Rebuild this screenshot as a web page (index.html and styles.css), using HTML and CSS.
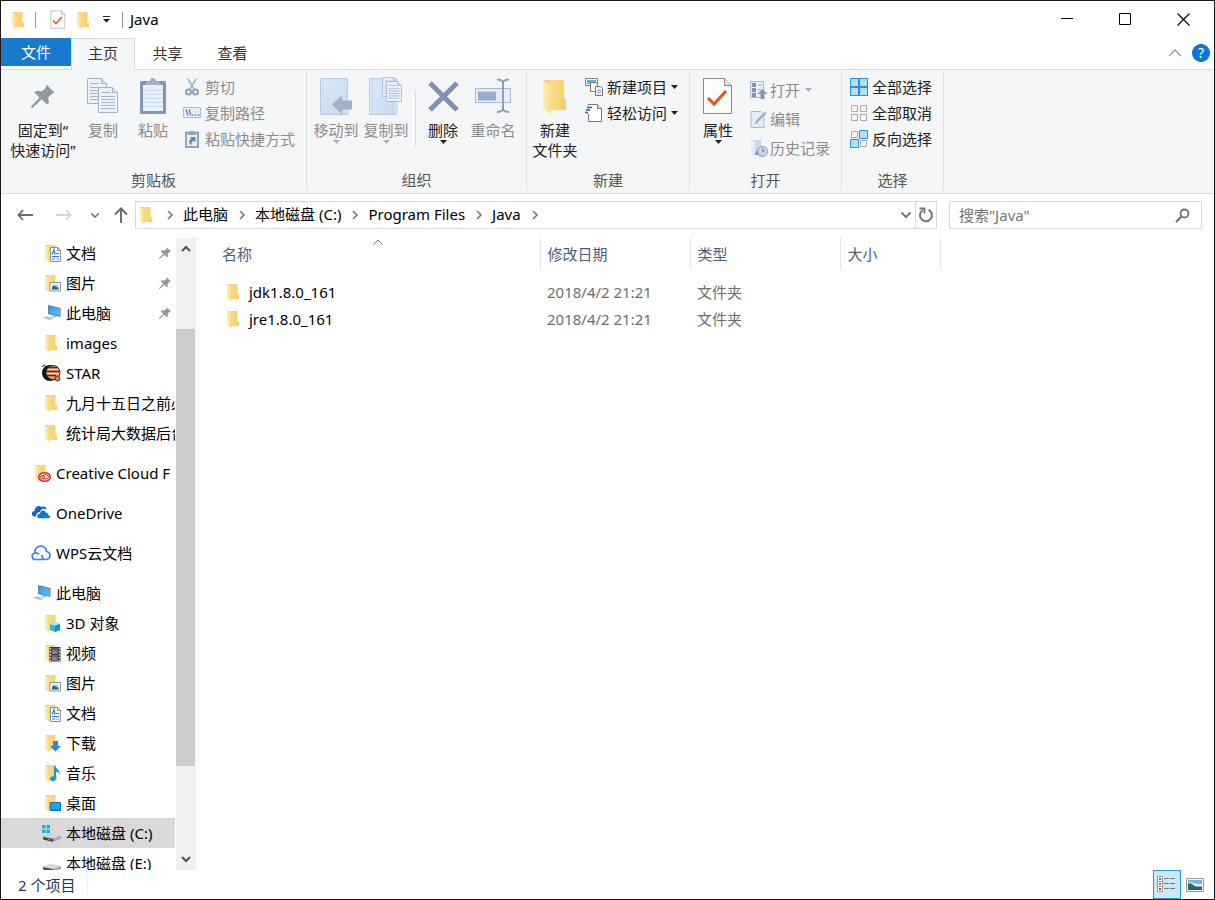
FILE: index.html
```html
<!DOCTYPE html>
<html lang="zh-CN">
<head>
<meta charset="utf-8">
<title>Java</title>
<link rel="stylesheet" href="styles.css">
</head>
<body>
<svg class="defs" aria-hidden="true">
  <defs>
    <linearGradient id="gBack" x1="0" x2="1"><stop offset="0" stop-color="#fbe097"/><stop offset="1" stop-color="#f6cf68"/></linearGradient>
    <linearGradient id="gFlap" x1="0" x2="1"><stop offset="0" stop-color="#ffedb0"/><stop offset="1" stop-color="#ffe08c"/></linearGradient>
    <linearGradient id="gScreen" x1="0" x2="1" y2="1"><stop offset="0" stop-color="#2b9be6"/><stop offset="1" stop-color="#57c4fb"/></linearGradient>
    <linearGradient id="gBlue" x1="0" x2="1" y2="1"><stop offset="0" stop-color="#dde8f6"/><stop offset="1" stop-color="#c9d9ee"/></linearGradient>
    <symbol id="folder" viewBox="0 0 20 20"><path d="M4 2h10.500v10.500h1.500v4.500H6z" fill="url(#gBack)"/><path d="M4 2l4 2.500v14L4 16.500z" fill="url(#gFlap)"/><path d="M4 2h4v2.500z" fill="#f5d27c"/><path d="M8 4.500v14" stroke="#f3cf73" stroke-width=".7"/></symbol>
    <symbol id="pin" viewBox="0 0 30 30"><path d="M18.500 2.500l9 9-3 1.200-4 4.300.8 5.500-2.300 1.500-5.500-5.500L3.500 28 2 26.500l9.300-9.800L5.800 11.500 8 9.300l6 .5 4.200-4z" fill="#8f9ba3"/></symbol>
    <symbol id="doc" viewBox="0 0 20 20"><use href="#folder"/><path d="M9.500 4.500h7L19.500 7v11.500h-10z" fill="#fff" stroke="#8c9196"/><path d="M16.500 4.500V7.500h3" fill="none" stroke="#8c9196"/><path d="M11 13.500h7M11 16h3M15.500 16H18M15 10.500H18" stroke="#2f86c8"/><path d="M11 11.500l2-5 1 5" fill="none" stroke="#2b86cc" stroke-width="1.300"/></symbol>
    <symbol id="picture" viewBox="0 0 20 20"><use href="#folder"/><path d="M9 9.500h10.500v8.500H9z" fill="#fff" stroke="#8f969c"/><path d="M11 11.500h6.500v5H11z" fill="#9dcff3"/><path d="M11 14l2-1.500 4.500 2.500v1.500H11z" fill="#2d6582"/></symbol>
    <symbol id="pc" viewBox="0 0 20 20"><path d="M7 2l12.500 3v9L7 11z" fill="#5b7f98"/><path d="M7.700 3l11 2.800v7L7.700 10z" fill="url(#gScreen)"/><path d="M1 14.500l6-1.500 7 2.500-5 2z" fill="#d5dade"/><path d="M3 14.800l4-.8M5 15.500l4-.9M7 16.200l4-.9" stroke="#a6afb6" stroke-width=".7"/><path d="M11 12.500l4 1v1l-4-1z" fill="#8fa2ae"/></symbol>
    <symbol id="sheet" viewBox="0 0 32 38"><path d="M1.500 1.500h21l7 7v28h-28z" fill="#fdfdfd" stroke="#868686"/><path d="M22.500 1.500v7h7" fill="#e6e6e6" stroke="#868686"/><path d="M6 21l6 6 12-13" fill="none" stroke="#e9531a" stroke-width="3"/></symbol>
    <symbol id="page" viewBox="0 0 20 26"><path d="M.5.500h14l5 5v20H.5z" fill="#eaf1fb" stroke="#9db3d2"/><path d="M14.500.500v5h5" fill="#d5e2f3" stroke="#9db3d2"/><path d="M3 5.500h9M3 9.500h14M3 12.500h14M3 15.500h14M3 18.500h14M3 21.500h14" stroke="#a3b6d2"/></symbol>
    <symbol id="book" viewBox="0 0 30 38"><path d="M.5.500h27v36H.5z" fill="url(#gBlue)" stroke="#b9cce6"/><path d="M3.500.500v36" stroke="#c8d8ed"/><path d="M24 26c0-3 4-3 4 0v10.500h-4z" fill="#d5e2f3" stroke="#b9cce6"/></symbol>
    <symbol id="chev" viewBox="0 0 8 10"><path d="M2 1l4 4-4 4" fill="none" stroke="#767676" stroke-width="1.600"/></symbol>
    <symbol id="down" viewBox="0 0 12 8"><path d="M1.500 1.500L6 6l4.500-4.500" fill="none" stroke="#777" stroke-width="2"/></symbol>
    <symbol id="caret" viewBox="0 0 7 4"><path d="M0 0h7L3.500 4z" fill="currentColor"/></symbol>
  </defs>
</svg>

<div class="window">
  <header class="titlebar">
    <svg class="icon"><use href="#folder"/></svg>
    <span class="bar"></span>
    <button class="quick" aria-label="属性"><svg class="i-sheet"><use href="#sheet"/></svg></button>
    <button class="quick" aria-label="新建文件夹"><svg class="icon"><use href="#folder"/></svg></button>
    <button class="quick more" aria-label="自定义快速访问工具栏"><svg width="7" height="7" viewBox="0 0 7 7"><path d="M0 .500h7" stroke="#222"/><path d="M0 3h7L3.500 6.500z" fill="#111"/></svg></button>
    <span class="bar"></span>
    <h1>Java</h1>
    <div class="winctl">
      <button aria-label="最小化"><svg width="13" height="13" viewBox="0 0 13 13"><path d="M0 5.500h12" stroke="#000"/></svg></button>
      <button aria-label="最大化"><svg width="13" height="13" viewBox="0 0 13 13"><path d="M.5.500h11v11H.5z" fill="none" stroke="#000"/></svg></button>
      <button aria-label="关闭"><svg width="13" height="13" viewBox="0 0 13 13"><path d="M.5.500l12 12M12.500.500l-12 12" stroke="#000" stroke-width="1.200"/></svg></button>
    </div>
  </header>

  <nav class="tabs">
    <button class="tab file">文件</button>
    <button class="tab active">主页</button>
    <button class="tab">共享</button>
    <button class="tab">查看</button>
    <div class="help">
      <button aria-label="最小化功能区"><svg width="14" height="8" viewBox="0 0 14 8"><path d="M1 7l6-6 6 6" fill="none" stroke="#9a9a9a" stroke-width="1.300"/></svg></button>
      <button aria-label="帮助" class="q">?</button>
    </div>
  </nav>

  <section class="ribbon">
    <div class="group">
      <div class="tools clip">
        <button class="big wide"><span class="pic"><svg width="28" height="28"><use href="#pin"/></svg></span>固定到“<br>快速访问”</button>
        <button class="big off"><span class="pic"><svg width="32" height="38" viewBox="0 0 32 38"><use href="#page" width="20" height="26" x="0" y="1"/><use href="#page" width="20" height="26" x="11" y="10"/></svg></span>复制</button>
        <button class="big off"><span class="pic"><svg width="28" height="38" viewBox="0 0 28 38"><rect x="1" y="4" width="26" height="33" rx="1.500" fill="#8296ba"/><path d="M4 8h20v26H4z" fill="#e8f0fb"/><path d="M4 13.500h20M4 17.500h20M4 21.500h20M4 25.500h20M4 29.500h20" stroke="#cddbef"/><path d="M6 8c0-3 3-4 5-4 0-4 6-4 6 0 2 0 5 1 5 4z" fill="#a0b1ce"/></svg></span>粘贴</button>
        <div class="list">
          <button class="small off"><svg class="si" viewBox="0 0 18 18"><path d="M5 1l6.500 11M13 1L6.500 12" stroke="#a9b6cb" stroke-width="1.800"/><circle cx="5.500" cy="14" r="2.500" fill="none" stroke="#8fa1bf" stroke-width="2"/><circle cx="12.500" cy="14" r="2.500" fill="none" stroke="#8fa1bf" stroke-width="2"/></svg>剪切</button>
          <button class="small off"><svg class="si" viewBox="0 0 18 18"><path d="M.5 3.500h17v10H.5z" fill="#e3ecf9" stroke="#a9bcda"/><path d="M3 5.500l2 6M6 5.500l2 6" stroke="#6d83aa" stroke-width="1.300"/><path d="M9 11h1.500M12 11h1.500M15 11h1.500" stroke="#6d83aa" stroke-width="1.300"/></svg>复制路径</button>
          <button class="small off"><svg class="si" viewBox="0 0 18 18"><path d="M3 2.500h12v14.500H3z" fill="#e8f0fb" stroke="#8fa3c4" stroke-width="2"/><path d="M5 3h2.500c0-3 3-3 3 0H13v2H5z" fill="#8fa3c4"/><path d="M6.500 14.500c-1-4 .5-5.500 2-5.500L7 7h5.500v5.500L11 11c-2 0-2.500 1.500-2.500 3.500z" fill="#6d83aa"/></svg>粘贴快捷方式</button>
        </div>
      </div>
      <h2>剪贴板</h2>
    </div>

    <div class="group">
      <div class="tools organize">
        <button class="big off"><span class="pic"><svg width="34" height="38" viewBox="0 0 34 38"><use href="#book" width="30" height="38" x="1" y="1"/><path d="M13 27.500l10-9v5h10v9H23v5z" fill="#a0b1cc"/></svg></span>移动到<svg class="caret"><use href="#caret"/></svg></button>
        <button class="big off"><span class="pic"><svg width="36" height="38" viewBox="0 0 36 38"><use href="#book" width="30" height="38" x="1" y="1"/><use href="#page" width="16" height="20" x="14" y="0"/><use href="#page" width="16" height="21" x="18" y="4"/></svg></span>复制到<svg class="caret"><use href="#caret"/></svg></button>
        <span class="sep"></span>
        <button class="big"><span class="pic"><svg width="34" height="38" viewBox="0 0 34 38"><path d="M4 6l27 27M31 6L4 33" stroke="#8091b1" stroke-width="5"/></svg></span>删除<svg class="caret"><use href="#caret"/></svg></button>
        <button class="big off"><span class="pic"><svg width="38" height="38" viewBox="0 0 38 38"><path d="M1.500 11.500h35v14h-35z" fill="#e4edf9" stroke="#a6b9d7"/><path d="M4 14.500h18v9H4z" fill="#9badcb"/><path d="M23 2.500c3 0 5 1 6 2.500 1-1.500 3-2.500 6-2.500M29 5v28M23 35c3 0 5-1 6-2.500 1 1.500 3 2.500 6 2.500" fill="none" stroke="#8b9fbf" stroke-width="2"/></svg></span>重命名</button>
      </div>
      <h2>组织</h2>
    </div>

    <div class="group">
      <div class="tools">
        <button class="big"><span class="pic"><svg width="28" height="38" viewBox="0 0 28 38"><path d="M3 3h20v19h2v11H9z" fill="url(#gBack)"/><path d="M2 3l8 5v29l-8-5z" fill="url(#gFlap)"/><path d="M2 3h7v4.500z" fill="#f5cf70"/></svg></span>新建<br>文件夹</button>
        <div class="list">
          <button class="small"><svg class="si" viewBox="0 0 18 18"><path d="M.5.500h12v7H.5z" fill="#fff" stroke="#6f8a9c"/><path d="M2 2h9v4H2z" fill="#5bb0e6"/><path d="M5.500 4.500h5l2 2v7h-7z" fill="#fff" stroke="#777"/><path d="M10.500 8.500h5l2 2v7h-7z" fill="#fff" stroke="#777"/><path d="M12 12.500h4M12 14.500h4" stroke="#6ea5dd"/><path d="M13.500 9v8" stroke="#eea0a0" stroke-width=".7"/></svg>新建项目<svg class="caret"><use href="#caret"/></svg></button>
          <button class="small"><svg class="si" viewBox="0 0 18 18"><path d="M3.500.500h9l4 4v13h-13z" fill="#fff" stroke="#777"/><path d="M12.500.500v4h4" fill="#e8e8e8" stroke="#777"/><path d="M1 3.500h7M0 6h6M0 8.500h5" stroke="#f4f5f7" stroke-width="3"/><path d="M2 3.500h5M1 6h4M0 8.500h3" stroke="#1a66ad" stroke-width="1.300"/></svg>轻松访问<svg class="caret"><use href="#caret"/></svg></button>
        </div>
      </div>
      <h2>新建</h2>
    </div>

    <div class="group">
      <div class="tools">
        <button class="big"><span class="pic"><svg width="32" height="38"><use href="#sheet"/></svg></span>属性<svg class="caret"><use href="#caret"/></svg></button>
        <div class="list loose">
          <button class="small off"><svg class="si" viewBox="0 0 18 18"><path d="M.5.500h13v16H.5z" fill="#e8f0fa" stroke="#a9b8d0"/><path d="M2 2h4v4H2zM2 7h4v4H2zM2 12h4v4H2z" fill="#7f92b4"/><path d="M8 4h4M8 8.500h3" stroke="#9aabc8"/><path d="M12.500 8l5 5h-3v5h-4v-5h-3z" fill="#8397bb"/></svg>打开<svg class="caret"><use href="#caret"/></svg></button>
          <button class="small off"><svg class="si" viewBox="0 0 18 18"><path d="M1 1.500h10l3 3v13H1z" fill="#e3ecf8" stroke="#a9b8d0"/><path d="M4 15l1-3.500L14.500 1l2.500 2.500L7 13.500z" fill="#9fb1cd" stroke="#fff" stroke-width=".6"/></svg>编辑</button>
          <button class="small off"><svg class="si" viewBox="0 0 18 18"><path d="M1 1h10v14H5z" fill="#cddaec"/><path d="M1 1l4 2v14l-4-2z" fill="#e3ecf8"/><circle cx="12.500" cy="12.500" r="5" fill="#c9d3e2" stroke="#8b9cb9"/><path d="M12.500 9.500v3l2.500-1" fill="none" stroke="#7387ab"/><path d="M5 14c1-3 3-2 3-2l1 4H5z" fill="#8b9fbf"/></svg>历史记录</button>
        </div>
      </div>
      <h2>打开</h2>
    </div>

    <div class="group">
      <div class="tools">
        <div class="list">
          <button class="small"><svg class="si" viewBox="0 0 18 18"><path d="M0 0h18v18H0z" fill="#2b90e0"/><path d="M1 1h7v7H1zM10 1h7v7h-7zM1 10h7v7H1zM10 10h7v7h-7z" fill="#b4dfff"/></svg>全部选择</button>
          <button class="small"><svg class="si" viewBox="0 0 18 18"><path d="M1.500 1.500h6v6h-6zM10.500 1.500h6v6h-6zM1.500 10.500h6v6h-6zM10.500 10.500h6v6h-6z" fill="#fafafa" stroke="#ababab"/></svg>全部取消</button>
          <button class="small"><svg class="si" viewBox="0 0 18 18"><path d="M1.500 1.500h6v6h-6zM10.500 10.500h6v6h-6z" fill="#fafafa" stroke="#ababab"/><path d="M9.500.500h8v8h-8zM.5 9.500h8v8H.5z" fill="#b4dfff" stroke="#2b90e0"/></svg>反向选择</button>
        </div>
      </div>
      <h2>选择</h2>
    </div>
  </section>

  <section class="navrow">
    <div class="moves">
      <button aria-label="后退"><svg width="16" height="12" viewBox="0 0 16 12"><path d="M6 1L1.500 6 6 11M1.500 6H16" fill="none" stroke="#6c6c6c" stroke-width="1.800"/></svg></button>
      <button aria-label="前进"><svg width="16" height="12" viewBox="0 0 16 12"><path d="M10 1l4.500 5-4.500 5M14.500 6H0" fill="none" stroke="#d6d6d6" stroke-width="1.800"/></svg></button>
      <button aria-label="最近浏览的位置" class="slim"><svg width="10" height="7"><use href="#down"/></svg></button>
      <button aria-label="上移" class="up"><svg width="14" height="16" viewBox="0 0 14 16"><path d="M1 7.500L7 1.500l6 6M7 1.500V16" fill="none" stroke="#6c6c6c" stroke-width="2"/></svg></button>
    </div>
    <div class="address">
      <svg class="icon"><use href="#folder"/></svg>
      <svg class="chev"><use href="#chev"/></svg><a href="#pc">此电脑</a>
      <svg class="chev"><use href="#chev"/></svg><a href="#c">本地磁盘 (C:)</a>
      <svg class="chev"><use href="#chev"/></svg><a href="#pf">Program Files</a>
      <svg class="chev"><use href="#chev"/></svg><a href="#java">Java</a>
      <svg class="chev"><use href="#chev"/></svg>
      <button class="drop" aria-label="以前的位置"><svg width="12" height="8"><use href="#down"/></svg></button>
      <button class="refresh" aria-label="刷新"><svg width="16" height="16" viewBox="0 0 16 16"><path d="M10.500 2.800a6 6 0 1 1-5.500.2" fill="none" stroke="#757575" stroke-width="2"/><path d="M1.500 1.500h5v5" fill="none" stroke="#757575" stroke-width="1.800"/></svg></button>
    </div>
    <label class="search"><input type="text" aria-label="搜索" placeholder='搜索"Java"'><svg width="15" height="15" viewBox="0 0 15 15"><circle cx="9.500" cy="5.500" r="4" fill="none" stroke="#6c6c6c" stroke-width="1.800"/><path d="M6.500 8.500L1 14" stroke="#6c6c6c" stroke-width="2.200"/></svg></label>
  </section>

  <main class="main">
    <aside class="side">
      <ul>
        <li><a href="#1"><svg class="icon"><use href="#doc"/></svg><span>文档</span><svg class="pin"><use href="#pin"/></svg></a></li>
        <li><a href="#2"><svg class="icon"><use href="#picture"/></svg><span>图片</span><svg class="pin"><use href="#pin"/></svg></a></li>
        <li><a href="#3"><svg class="icon"><use href="#pc"/></svg><span>此电脑</span><svg class="pin"><use href="#pin"/></svg></a></li>
        <li><a href="#4"><svg class="icon"><use href="#folder"/></svg><span>images</span></a></li>
        <li><a href="#5"><svg class="icon" viewBox="0 0 20 20"><circle cx="9" cy="10" r="8" fill="#111"/><path d="M1.500 4c0-2.500 3-2.500 3 0" fill="none" stroke="#111"/><circle cx="12" cy="9.500" r="7" fill="#e9a074"/><path d="M7 4.500h10M5.500 8.500h13M6 12.500h9" stroke="#5a2d1c" stroke-width="1.300"/><path d="M6 10.500h12M7 6.500h10" stroke="#fbe3d2"/><circle cx="12" cy="9.500" r="7" fill="none" stroke="#3a2a20"/><circle cx="16.500" cy="15.500" r="2.500" fill="#f08a1c" stroke="#5a2d1c"/></svg><span>STAR</span></a></li>
        <li><a href="#6"><svg class="icon"><use href="#folder"/></svg><span>九月十五日之前必</span></a></li>
        <li><a href="#7"><svg class="icon"><use href="#folder"/></svg><span>统计局大数据后台</span></a></li>
      </ul>
      <ul class="top">
        <li><a href="#8"><svg class="icon" viewBox="0 0 20 20"><use href="#folder"/><ellipse cx="13.500" cy="14" rx="5.800" ry="4.300" fill="#fff" stroke="#d92a23" stroke-width="1.500"/><ellipse cx="11.500" cy="14.300" rx="2.300" ry="1.700" fill="none" stroke="#d92a23"/><ellipse cx="14.500" cy="13.800" rx="3" ry="2.200" fill="none" stroke="#d92a23"/></svg><span>Creative Cloud F</span></a></li>
      </ul>
      <ul class="top">
        <li><a href="#9"><svg class="icon" viewBox="0 0 20 20"><path d="M5 13.500H3.500C0 13 0 8.500 3.500 8 4 3.500 8 1.500 10.500 4c3-1.500 5 .5 5 2.500-4-2-6 .5-6.500 2.500-3-.3-4 2.500-4 4.500z" fill="#0b67c2"/><path d="M8 15.500c-3-.5-2.500-5 .7-5C9 6.500 14 6 15 9.500c2 0 2.500 1 2.500 2.500 2.500.5 2 3.500 0 3.500z" fill="#0f78d7" stroke="#fff" stroke-width=".6"/></svg><span>OneDrive</span></a></li>
      </ul>
      <ul class="top">
        <li><a href="#10"><svg class="icon" viewBox="0 0 20 20"><path d="M13.500 16.500H4.500C.5 16.500-.2 11 4 10 3 1.500 15 .500 15.500 8.500c4.500 0 5 8-1 8-3 0-4-3-3-4.500M4 10c1.500-.3 3 .2 4 1.500" fill="none" stroke="#3d82ee" stroke-width="1.700"/></svg><span>WPS云文档</span></a></li>
      </ul>
      <ul class="top">
        <li><a href="#11"><svg class="icon"><use href="#pc"/></svg><span>此电脑</span></a></li>
      </ul>
      <ul>
        <li><a href="#12"><svg class="icon" viewBox="0 0 20 20"><use href="#folder"/><path d="M9 11l5-2 5 2v6l-5 2-5-2z" fill="#35b9d8"/><path d="M9 11l5-2 5 2-5 1.700z" fill="#a9ecf7"/><path d="M14 12.700V19l5-2v-6z" fill="#1496bb"/></svg><span>3D 对象</span></a></li>
        <li><a href="#13"><svg class="icon" viewBox="0 0 20 20"><use href="#folder"/><path d="M8.500 4H19.500V18.500H8.500z" fill="#343434"/><path d="M11 5.500h6v5.500H11zM11 12h6v5.500H11z" fill="#3f6dc0"/><path d="M11 9l3-1.500 3 3.500H11zM11 15l3-1.500 3 4H11z" fill="#c07a3c"/><path d="M9.700 5V18M18.300 5V18" stroke="#eee" stroke-width="1.200" stroke-dasharray="1.500 1.500"/></svg><span>视频</span></a></li>
        <li><a href="#14"><svg class="icon"><use href="#picture"/></svg><span>图片</span></a></li>
        <li><a href="#15"><svg class="icon"><use href="#doc"/></svg><span>文档</span></a></li>
        <li><a href="#16"><svg class="icon" viewBox="0 0 20 20"><use href="#folder"/><path d="M12 8h5v5h3l-5.500 5.500L9 13h3z" fill="#2f86d6"/></svg><span>下载</span></a></li>
        <li><a href="#17"><svg class="icon" viewBox="0 0 20 20"><use href="#folder"/><path d="M13 3h1.500c0 3 5 4 4.500 9-1-3-2.500-3-4-3.500V15c0 4-6 4-6 1 0-2 2-3 4-2.500z" fill="#0a9bf0"/></svg><span>音乐</span></a></li>
        <li><a href="#18"><svg class="icon" viewBox="0 0 20 20"><use href="#folder"/><path d="M9 9.500h10.500v8H9z" fill="#1ba3f5" stroke="#1173b5"/><path d="M10 16.500h9" stroke="#0b568c" stroke-dasharray="1 1"/></svg><span>桌面</span></a></li>
        <li><a href="#19" class="selected"><svg class="icon" viewBox="0 0 20 20"><path d="M1 14l9-4 10 3-8 3z" fill="#d2d2d2"/><path d="M2 13.700l10 2V19L2 16.500z" fill="#4a4f52"/><path d="M12 15.700l8-3v3L12 19z" fill="#a5a8aa"/><path d="M7 15.800l2 .5v1l-2-.5z" fill="#4be04b"/><path d="M1 2h3.500v3.500H1zM5.500 2H9v3.500H5.500zM1 6.500h3.500V10H1zM5.500 6.500H9V10H5.500z" fill="#12b4ea"/></svg><span>本地磁盘 (C:)</span></a></li>
        <li><a href="#20"><svg class="icon" viewBox="0 0 20 20"><path d="M2 14l7-3.500 11 2.500-8 3z" fill="#d8d8d8"/><path d="M2 14l10 2V19L2 16.500z" fill="#4a4f52"/><path d="M12 16l8-3v3l-8 3z" fill="#a5a8aa"/></svg><span>本地磁盘 (E:)</span></a></li>
      </ul>
    </aside>
    <div class="scroll">
      <button aria-label="向上滚动"><svg width="10" height="7" viewBox="0 0 10 7"><path d="M1 6l4-4 4 4" fill="none" stroke="#505050" stroke-width="2"/></svg></button>
      <div class="track"><div class="thumb"></div></div>
      <button aria-label="向下滚动"><svg width="10" height="7" viewBox="0 0 10 7"><path d="M1 1l4 4 4-4" fill="none" stroke="#505050" stroke-width="2"/></svg></button>
    </div>
    <div class="files">
      <table>
        <colgroup><col class="c-name"><col class="c-mid"><col class="c-mid"><col class="c-size"><col></colgroup>
        <thead><tr>
          <th class="name">名称<svg class="sort" viewBox="0 0 10 6"><path d="M.5 5.500L5 1l4.500 4.500" fill="none" stroke="#777"/></svg></th><th>修改日期</th><th>类型</th><th>大小</th><td></td>
        </tr></thead>
        <tbody>
          <tr><td class="name"><a href="#jdk"><svg class="icon"><use href="#folder"/></svg>jdk1.8.0_161</a></td><td>2018/4/2 21:21</td><td>文件夹</td><td></td><td></td></tr>
          <tr><td class="name"><a href="#jre"><svg class="icon"><use href="#folder"/></svg>jre1.8.0_161</a></td><td>2018/4/2 21:21</td><td>文件夹</td><td></td><td></td></tr>
        </tbody>
      </table>
    </div>
  </main>

  <footer class="status">
    <span class="count">2 个项目</span>
    <div class="views">
      <button class="on" aria-label="详细信息"><svg width="20" height="17" viewBox="0 0 20 17"><path d="M.5.500h5v5h-5zM.5 5.500h5v5h-5zM.5 10.500h5v5h-5z" fill="#fff" stroke="#9a9a9a"/><path d="M2 2h2v2H2z" fill="#2c7fb5"/><path d="M2 7h2v2H2z" fill="#6e9a38"/><path d="M2 12h2v2H2z" fill="#c33c1c"/><path d="M7 2.500h5M13 2.500h5M7 7.500h5M13 7.500h5M7 12.500h5M13 12.500h5" stroke="#777"/></svg></button>
      <button aria-label="大缩略图"><svg width="18" height="14" viewBox="0 0 18 14"><path d="M.5.500h17v13H.5z" fill="#fff" stroke="#999"/><path d="M2 2h14v10H2z" fill="#6fb2ee"/><path d="M2 4c4 0 6 2 14 2v2H2z" fill="#d9ecfa"/><path d="M2 5c5 0 6 4 10 4H2z" fill="#2f6f5a"/><path d="M2 9h14v3H2z" fill="#2c5d8f"/></svg></button>
    </div>
  </footer>
</div>
</body>
</html>
```

FILE: styles.css
```css
* { box-sizing: border-box; }
body {
  margin: 0;
  font: 15px/20px "Noto Sans", "Noto Sans CJK SC", sans-serif;
  color: #000;
  background: #fff;
}
button, input { font: inherit; color: inherit; }
button { border: 0; padding: 0; background: none; }
a { color: inherit; text-decoration: none; }
svg { display: block; flex: none; }
h1, h2, ul { margin: 0; padding: 0; font: inherit; list-style: none; }
.defs { position: absolute; width: 0; height: 0; }
.icon { width: 20px; height: 20px; }

.window {
  display: flex;
  flex-direction: column;
  height: 100vh;
  border: 1px solid #1a1a1a;
  overflow: hidden;
}

.titlebar { display: flex; align-items: center; flex: none; height: 37px; padding-left: 7px; }
.titlebar h1 { padding-bottom: 2px; }
.bar { width: 1px; height: 16px; margin: 0 11px 0 7px; background: #9a9a9a; }
.titlebar .quick { display: flex; justify-content: center; width: 22px; margin-right: 3px; }
.i-sheet { width: 16px; height: 19px; }
.titlebar .more { width: 18px; margin-right: 0; }
.more + .bar { margin-right: 7px; }
.winctl { display: flex; margin-left: auto; padding-right: 2px; }
.winctl button { display: flex; align-items: center; justify-content: center; width: 58px; height: 37px; }

.tabs { display: flex; flex: none; height: 32px; border-bottom: 1px solid #dadbdc; color: #333; }
.tab { width: 65px; height: 31px; padding-bottom: 1px; }
.tab.file { width: 70px; height: 28px; padding: 0; background: #1979ca; color: #fff; }
.tab.active { width: 64px; height: 32px; padding-bottom: 3px; border: 1px solid #dadbdc; border-bottom: 0; background: #f5f6f7; }
.help { display: flex; align-items: center; gap: 10px; margin-left: auto; padding: 0 4px 2px 0; }
.help .q { width: 18px; height: 18px; border: 1px solid #1264ad; border-radius: 50%; background: #0a78d7; color: #fff; font-size: 14px; line-height: 16px; }

.ribbon { display: flex; flex: none; height: 124px; padding-top: 2px; background: #f5f6f7; border-bottom: 1px solid #dadbdc; color: #222; }
.group { display: flex; flex-direction: column; height: 119px; border-right: 1px solid #e0e1e2; }
.group h2 { margin-top: auto; padding-bottom: 1px; text-align: center; color: #555; }
.tools { display: flex; flex: none; padding: 0 11px 0 3px; }
.tools.clip { padding-left: 7px; }
.tools.organize { padding: 0 8px 0 4px; }
.big { display: flex; flex-direction: column; align-items: center; width: 50px; padding-top: 5px; white-space: nowrap; }
.big.wide { width: 70px; }
.pic { display: flex; align-items: center; justify-content: center; height: 38px; margin-bottom: 5px; }
.off { color: #8b8b8b; }
.caret { width: 7px; height: 4px; color: #222; }
.off .caret { color: #b0b0b0; }
.sep { width: 1px; height: 56px; margin: 18px 2px 0 4px; background: #dcdddf; }
.list { display: flex; flex-direction: column; align-items: flex-start; padding: 2px 0 0 5px; }
.small { display: flex; align-items: center; gap: 4px; height: 26px; white-space: nowrap; }
.loose { padding: 3px 0 0 7px; }
.loose .small { gap: 2px; height: 29px; }
.loose .caret { margin-left: 3px; }
.si { width: 18px; height: 18px; }

.navrow { display: flex; align-items: center; flex: none; height: 44px; padding: 0 12px 2px 14px; }
.moves { display: flex; align-items: center; width: 120px; }
.moves button { display: flex; justify-content: center; width: 20px; margin-right: 19px; }
.moves .slim { margin-left: -8px; margin-right: 6px; }
.moves .up { margin: 0; }
.address { display: flex; align-items: center; flex: 1; height: 28px; border: 1px solid #d9d9d9; }
.address a { padding-bottom: 2px; }
.chev { width: 8px; height: 10px; margin: 0 9px 0 10px; }
.drop { margin: 0 3px 0 auto; }
.refresh { display: flex; align-items: center; justify-content: center; width: 21px; height: 26px; border-left: 1px solid #d9d9d9; }
.search { display: flex; align-items: center; width: 253px; height: 28px; margin-left: 12px; padding: 0 11px 0 9px; border: 1px solid #d9d9d9; }
.search input { flex: 1; min-width: 0; padding: 0; border: 0; outline: 0; }
.search input::placeholder { color: #767676; opacity: 1; }

.main { display: flex; flex: 1; min-height: 0; }
.side { flex: none; width: 175px; padding-right: 1px; overflow: hidden; }
.side a { display: flex; align-items: center; gap: 4px; height: 30px; padding-left: 40px; overflow: hidden; white-space: nowrap; }
.side .top { margin-top: 10px; }
.side .top a { padding-left: 30px; }
.side .selected { background: #d9d9d9; }
.side .icon { margin-right: 1px; }
.side .pin { width: 14px; height: 14px; margin-left: auto; margin-right: 3px; }
.scroll { display: flex; flex-direction: column; flex: none; width: 20px; background: #f0f0f0; }
.scroll button { display: flex; align-items: center; justify-content: center; height: 21px; }
.track { flex: 1; padding: 70px 1px 0 0; }
.thumb { height: 84%; background: #cdcdcd; }
.files { flex: 1; margin-left: 2px; border-left: 1px solid #f3f3f3; }
table { width: 100%; table-layout: fixed; border-collapse: collapse; color: #6d6d6d; }
.c-name { width: 341px; }
.c-mid { width: 150px; }
.c-size { width: 100px; }
th { position: relative; height: 32px; padding: 0 0 0 7px; border-right: 1px solid #e5e5e5; text-align: left; font-weight: 400; color: #4c607a; }
th.name { padding-left: 23px; }
.sort { position: absolute; top: 1px; left: 51%; width: 10px; height: 6px; }
td { height: 27px; padding: 0 0 0 7px; }
td.name { padding-left: 24px; color: #000; }
td a { display: flex; align-items: center; gap: 6px; }
tbody::before { content: ""; display: block; height: 8px; }

.status { display: flex; align-items: center; flex: none; height: 29px; color: #1e395b; }
.count { padding: 0 12px 0 17px; border-right: 1px solid #f0f0f0; }
.views { display: flex; margin-left: auto; padding-right: 6px; }
.views button { display: flex; align-items: center; justify-content: center; width: 27px; height: 29px; }
.views .on { width: 28px; border: 1px solid #26a0da; background: #cbe8f6; }
```
